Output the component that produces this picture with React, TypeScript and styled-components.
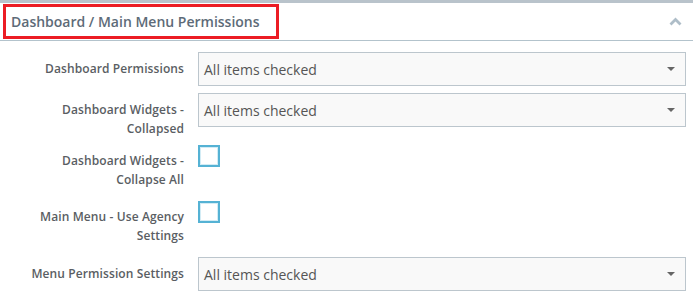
import React from 'react'
import styled, { createGlobalStyle } from 'styled-components'

const GlobalStyle = createGlobalStyle`
    html, body {
        margin: 0;
        padding: 0;
        background: #ffffff;
    }
    body {
        font-family: "Open Sans", "Liberation Sans", sans-serif;
    }
`

const Panel = styled.div`
    width: 693px;
    border-top: 3px solid #b9c3cb;
    background: #ffffff;
`

const PanelHeader = styled.div`
    height: 37px;
    display: flex;
    align-items: center;
    justify-content: space-between;
    border-bottom: 1px solid #b3c3cc;
    padding: 0 11px 0 3px;
`

const TitleBox = styled.div`
    box-sizing: border-box;
    width: 276px;
    height: 35px;
    border: 3px solid #ec1c24;
    display: flex;
    align-items: center;
    padding-left: 5px;
`

const Title = styled.span`
    font-size: 14px;
    font-weight: 600;
    color: #5d6b78;
`

const Body = styled.div`
    padding: 11px 7px 0 0;
`

const Row = styled.div<{ $after: number }>`
    display: grid;
    grid-template-columns: 184px 1fr;
    column-gap: 14px;
    align-items: start;
    margin-bottom: ${props => props.$after}px;
`

const Label = styled.div`
    text-align: right;
    font-size: 12px;
    font-weight: 600;
    line-height: 19px;
    color: #5a5e63;
    padding-top: 7px;
    white-space: nowrap;
    letter-spacing: 0.1px;
`

const Select = styled.div`
    box-sizing: border-box;
    height: 34px;
    border: 1px solid #bcc6cd;
    background: #f9f9f9;
    display: flex;
    align-items: center;
    justify-content: space-between;
    padding: 0 10px 0 5px;
    font-size: 14px;
    color: #555555;
`

const Caret = styled.span`
    width: 0;
    height: 0;
    border-left: 4px solid transparent;
    border-right: 4px solid transparent;
    border-top: 4px solid #666666;
`

const Checkbox = styled.div<{ $top: number }>`
    box-sizing: border-box;
    width: 22px;
    height: 22px;
    margin-top: ${props => props.$top}px;
    border: 2px solid #55b2d4;
    box-shadow: inset 0 0 0 1px #d3ecf5;
    background: #ffffff;
`

const Chevron = () => (
	<svg width="13" height="9" viewBox="0 0 13 9">
		<polyline points="1.5,7.5 6.5,2.5 11.5,7.5" fill="none" stroke="#aebdc8" strokeWidth="2.8" />
	</svg>
)

type Field =
	| { label: string[], kind: 'select', after: number }
	| { label: string[], kind: 'check', after: number, top: number }

const fields: Field[] = [
	{ label: ['Dashboard Permissions'], kind: 'select', after: 7 },
	{ label: ['Dashboard Widgets -', 'Collapsed'], kind: 'select', after: 6 },
	{ label: ['Dashboard Widgets -', 'Collapse All'], kind: 'check', after: 11, top: 1 },
	{ label: ['Main Menu - Use Agency', 'Settings'], kind: 'check', after: 12, top: 1 },
	{ label: ['Menu Permission Settings'], kind: 'select', after: 0 },
]

const App = () => (
	<>
		<GlobalStyle />
		<Panel>
			<PanelHeader>
				<TitleBox>
					<Title>Dashboard / Main Menu Permissions</Title>
				</TitleBox>
				<Chevron />
			</PanelHeader>
			<Body>
				{fields.map(field => (
					<Row key={field.label.join(' ')} $after={field.after}>
						<Label>
							{field.label.map(line => <div key={line}>{line}</div>)}
						</Label>
						{field.kind === 'select' ? (
							<Select>
								All items checked
								<Caret />
							</Select>
						) : (
							<Checkbox $top={field.top} />
						)}
					</Row>
				))}
			</Body>
		</Panel>
	</>
)

export default App
